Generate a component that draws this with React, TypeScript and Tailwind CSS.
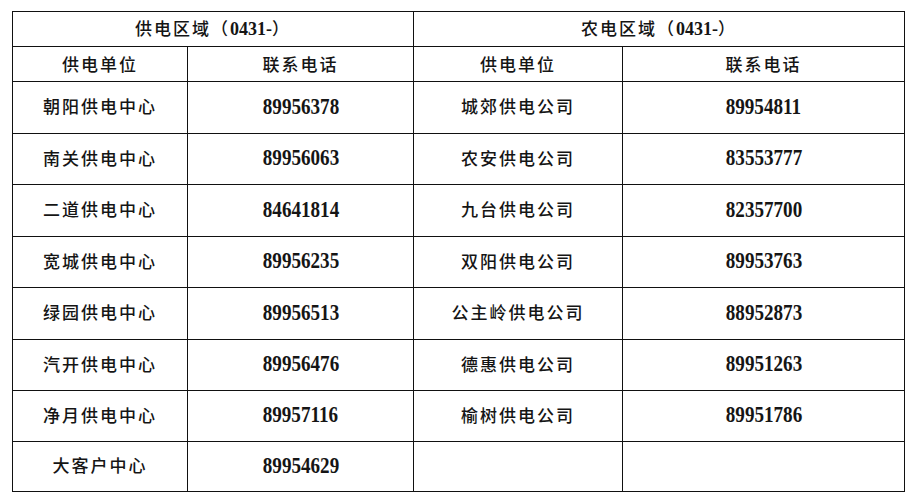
const cjk = "font-['Noto_Sans_CJK_SC','Noto_Sans',sans-serif] font-medium text-[17px] tracking-[2px]";
const num = "font-['Liberation_Serif','Times_New_Roman',serif] font-bold text-[23px] inline-block scale-x-[0.83] leading-none";

const rows: { a: string; b: string; c: string; d: string; h: string }[] = [
  { a: "朝阳供电中心", b: "89956378", c: "城郊供电公司", d: "89954811", h: "h-[52px]" },
  { a: "南关供电中心", b: "89956063", c: "农安供电公司", d: "83553777", h: "h-[51px]" },
  { a: "二道供电中心", b: "84641814", c: "九台供电公司", d: "82357700", h: "h-[52px]" },
  { a: "宽城供电中心", b: "89956235", c: "双阳供电公司", d: "89953763", h: "h-[51px]" },
  { a: "绿园供电中心", b: "89956513", c: "公主岭供电公司", d: "88952873", h: "h-[52px]" },
  { a: "汽开供电中心", b: "89956476", c: "德惠供电公司", d: "89951263", h: "h-[51px]" },
  { a: "净月供电中心", b: "89957116", c: "榆树供电公司", d: "89951786", h: "h-[51px]" },
  { a: "大客户中心", b: "89954629", c: "", d: "", h: "h-[50px]" },
];

function Cell({ className = "", children }: { className?: string; children?: React.ReactNode }) {
  return (
    <div className={`flex items-center justify-center border-r border-b border-[#111] text-[#151515] ${className}`}>
      {children}
    </div>
  );
}

function Region({ name }: { name: string }) {
  return (
    <span className={cjk}>
      {name}（<span className="font-['Liberation_Serif',serif] font-bold text-[18px] tracking-normal">0431-</span>）
    </span>
  );
}

export default function App() {
  return (
    <div className="min-h-screen bg-white pl-[12px] pt-[11px]">
      <div className="grid w-[893px] grid-cols-[175px_226px_209px_282px] border-t border-l border-[#111]">
        <Cell className="col-span-2 h-[35px]">
          <Region name="供电区域" />
        </Cell>
        <Cell className="col-span-2 h-[35px]">
          <Region name="农电区域" />
        </Cell>

        {["供电单位", "联系电话", "供电单位", "联系电话"].map((t, i) => (
          <Cell key={i} className="h-[35px]">
            <span className={cjk}>{t}</span>
          </Cell>
        ))}

        {rows.map((r) => (
          <div key={r.a} className="contents">
            <Cell className={`${r.h} pb-[3px]`}>
              <span className={cjk}>{r.a}</span>
            </Cell>
            <Cell className={`${r.h} pb-[3px]`}>
              <span className={num}>{r.b}</span>
            </Cell>
            <Cell className={`${r.h} pb-[3px]`}>
              {r.c && <span className={cjk}>{r.c}</span>}
            </Cell>
            <Cell className={`${r.h} pb-[3px]`}>
              {r.d && <span className={num}>{r.d}</span>}
            </Cell>
          </div>
        ))}
      </div>
    </div>
  );
}
